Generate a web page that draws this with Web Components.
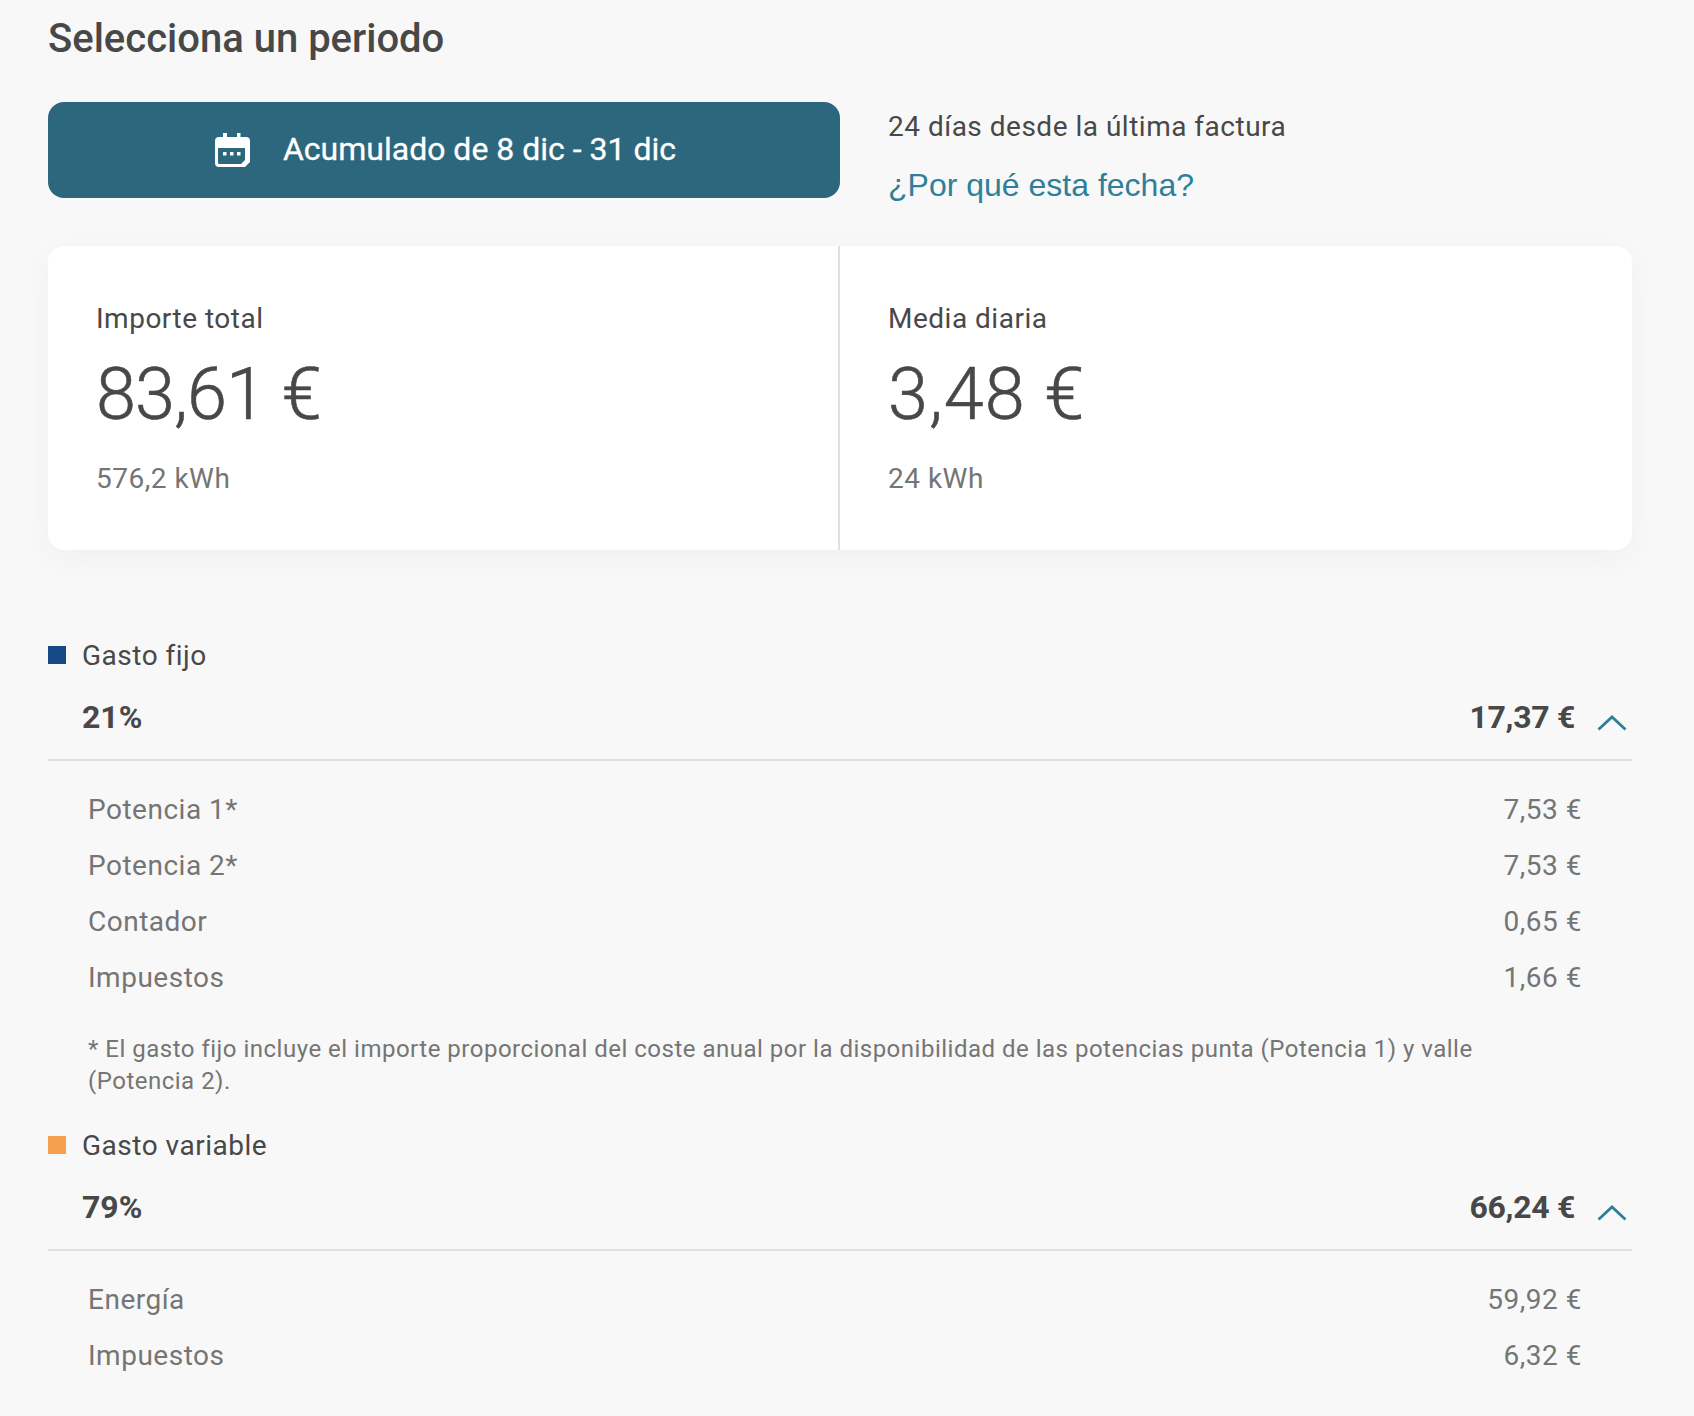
<!DOCTYPE html>
<html lang="es"><head><meta charset="utf-8"><title>Periodo</title>
<style>
html,body{margin:0;background:#f8f8f8;}
body{font-family:Roboto,"Liberation Sans",sans-serif;color:#484848;}
</style></head><body>
<bill-page>
  <h-title>Selecciona un periodo</h-title>
  <period-row>
    <period-button>Acumulado de 8 dic - 31 dic</period-button>
    <span slot="info">24 días desde la última factura</span>
    <span slot="link">¿Por qué esta fecha?</span>
  </period-row>
  <summary-card>
    <stat-cell style="--ls:-.9px" label="Importe total" value="83,61 €" sub="576,2 kWh"></stat-cell>
    <stat-cell style="--ls:1px" divider label="Media diaria" value="3,48 €" sub="24 kWh"></stat-cell>
  </summary-card>
  <cost-group style="--top:81px" color="#174a85" name="Gasto fijo" pct="21%" total="17,37 €">
    <cost-line name="Potencia 1*" amount="7,53 €"></cost-line>
    <cost-line name="Potencia 2*" amount="7,53 €"></cost-line>
    <cost-line name="Contador" amount="0,65 €"></cost-line>
    <cost-line name="Impuestos" amount="1,66 €"></cost-line>
    <foot-note>* El gasto fijo incluye el importe proporcional del coste anual por la disponibilidad de las potencias punta (Potencia 1) y valle (Potencia 2).</foot-note>
  </cost-group>
  <cost-group style="--top:24px" color="#f5a04f" name="Gasto variable" pct="79%" total="66,24 €">
    <cost-line name="Energía" amount="59,92 €"></cost-line>
    <cost-line name="Impuestos" amount="6,32 €"></cost-line>
  </cost-group>
</bill-page>
<script>
function def(name, html){
  customElements.define(name, class extends HTMLElement{
    constructor(){super();this.attachShadow({mode:'open'});}
    connectedCallback(){
      const a=n=>this.getAttribute(n)||'';
      this.shadowRoot.innerHTML=typeof html==='function'?html(a):html;
    }
  });
}
def('bill-page',`<style>:host{display:block;box-sizing:border-box;width:1694px;height:1416px;overflow:hidden;padding:0 62px 0 48px}</style><slot></slot>`);
def('h-title',`<style>:host{display:block;font-size:40px;font-weight:500;line-height:48px;padding-top:15px;color:#484848}</style><slot></slot>`);
def('period-row',`<style>
:host{display:grid;grid-template-columns:792px 1fr;column-gap:48px;margin-top:39px;height:96px}
.info{display:flex;flex-direction:column;}
.t{font-size:28px;line-height:32px;color:#484848;letter-spacing:.5px;padding-top:9px}
.l{font-family:"Liberation Sans",Arial,sans-serif;font-size:32px;line-height:40px;color:#2e7f99;margin-top:22px}
</style><slot></slot><div class="info"><div class="t"><slot name="info"></slot></div><div class="l"><slot name="link"></slot></div></div>`);
def('period-button',`<style>
:host{display:flex;align-items:center;justify-content:center;gap:33px;box-sizing:border-box;padding-left:3px;background:#2d677d;color:#fff;border-radius:16px;height:96px;font-size:32px;font-weight:400;letter-spacing:0;-webkit-text-stroke:.3px #fff}
span{position:relative;top:-1px}
svg{width:35px;height:34px;display:block}
</style><svg viewBox="0 0 35 34"><path fill="#fff" fill-rule="evenodd" d="M8 0h4v4h10V0h3.500v4H31a4 4 0 0 1 4 4v21l-5 5H4a4 4 0 0 1-4-4V8a4 4 0 0 1 4-4h4zM3 15v14.500a1.500 1.500 0 0 0 1.500 1.500H26l4-4V15z"/><rect x="8" y="19" width="3.500" height="3.500" fill="#fff"/><rect x="15" y="19" width="3.500" height="3.500" fill="#fff"/><rect x="22" y="19" width="3.500" height="3.500" fill="#fff"/></svg><span><slot></slot></span>`);
def('summary-card',`<style>:host{display:grid;grid-template-columns:792px 1fr;background:#fff;border-radius:16px;height:304px;margin-top:48px;box-shadow:0 8px 32px rgba(0,0,0,.04)}</style><slot></slot>`);
def('stat-cell',a=>`<style>
:host{display:block;box-sizing:border-box;padding:53px 48px 0}
:host([divider]){border-left:2px solid #e0e0e0;margin-left:-2px}
.a{font-size:28px;line-height:40px;color:#484848;letter-spacing:.5px}
.v{font-size:72px;line-height:84px;font-weight:300;-webkit-text-stroke:.6px #484848;color:#484848;margin-top:14px;letter-spacing:var(--ls)}
.s{font-size:28px;line-height:40px;color:#757575;margin-top:22px;letter-spacing:.5px}
</style><div class="a">${a('label')}</div><div class="v">${a('value')}</div><div class="s">${a('sub')}</div>`);
def('cost-group',a=>`<style>
:host{display:block;margin-top:var(--top)}
.n{display:flex;align-items:center;height:48px;font-size:28px;color:#484848;letter-spacing:.5px}
.sq{width:18px;height:18px;background:${a('color')};margin-right:16px}
.h{display:flex;align-items:center;justify-content:space-between;height:82px;border-bottom:2px solid #e0e0e0;padding:0 5px 5px 34px;box-sizing:border-box;font-size:32px;font-weight:700;color:#484848}
.h>div{display:flex;align-items:center}
.h>div>span{letter-spacing:-.3px}
svg{width:30px;height:16px;margin-left:22px;margin-top:12px;display:block}
.b{padding-top:20px}
</style><div class="n"><span class="sq"></span>${a('name')}</div>
<div class="h"><span>${a('pct')}</span><div><span>${a('total')}</span><svg viewBox="0 0 30 16"><path d="M1.500 14.500L15 2l13.500 12.500" fill="none" stroke="#2e7f99" stroke-width="2.800"/></svg></div></div>
<div class="b"><slot></slot></div>`);
def('cost-line',a=>`<style>:host{display:flex;justify-content:space-between;height:56px;align-items:center;padding:0 50px 0 40px;font-size:28px;color:#757575;letter-spacing:.5px}</style><span>${a('name')}</span><span>${a('amount')}</span>`);
def('foot-note',`<style>:host{display:block;font-size:24px;line-height:32px;color:#757575;padding:28px 150px 0 40px;letter-spacing:.5px}</style><slot></slot>`);
</script>
</body></html>
